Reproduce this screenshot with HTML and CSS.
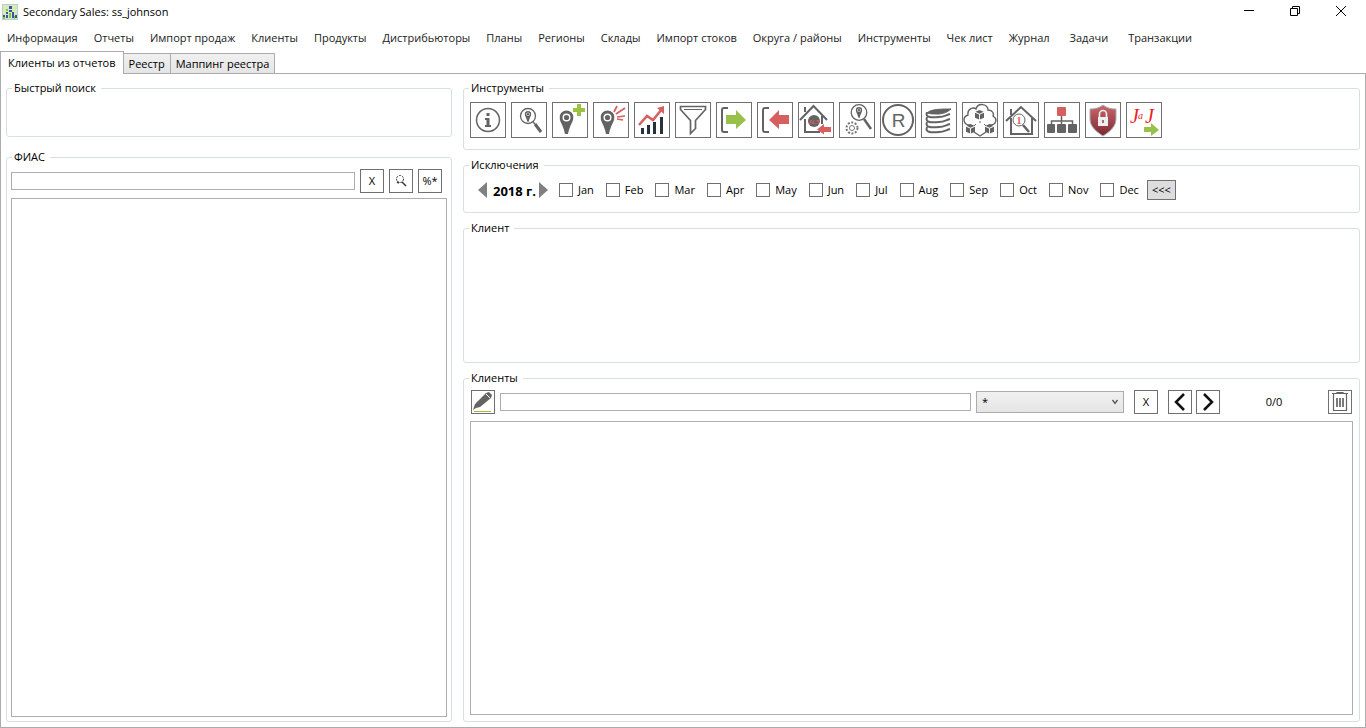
FILE: index.html
```html
<!DOCTYPE html>
<html lang="ru">
<head>
<meta charset="utf-8">
<title>Secondary Sales: ss_johnson</title>
<link rel="stylesheet" href="styles.css">
</head>
<body>
<svg class="defs" aria-hidden="true">
  <defs>
    <linearGradient id="shieldFill" x1="0" y1="0" x2="0" y2="1"><stop offset="0" stop-color="#c9686a"/><stop offset="1" stop-color="#7d2733"/></linearGradient>
    <symbol id="pin" viewBox="0 0 14 24"><path fill="#636363" fill-rule="evenodd" d="M7 0a7 7 0 0 1 7 7c0 4-4 8-5.500 16.500h-3C4 15 0 11 0 7a7 7 0 0 1 7-7zm0 3a4 4 0 1 0 0 8 4 4 0 0 0 0-8z"/><circle cx="7" cy="7" r="2.600" fill="#636363"/></symbol>
    <symbol id="cube" viewBox="0 0 10 11"><path fill="#636363" d="M5 0l4.500 2L5 4 .5 2zM0 3l4.500 2v5.500L0 8.500zM10 3v5.500l-4.500 2V5z"/></symbol>
  </defs>
</svg>
<header class="titlebar">
  <svg class="app-icon" viewBox="0 0 16 16"><rect x=".5" y=".5" width="15" height="15" fill="#d9eab9" stroke="#b5cfd0"/><g fill="#2f58a6"><rect x="1" y="11" width="2" height="2"/><rect x="4" y="8" width="2" height="2"/><rect x="4" y="11" width="2" height="3"/><rect x="7" y="2" width="3" height="3"/><rect x="7" y="6" width="3" height="2"/><rect x="10" y="8" width="2" height="6"/><rect x="13" y="11" width="2" height="3"/></g><path fill="#8fbf45" d="M7 9h2v5H7zM1 13h2v2H1zM12 12h1v3h-1zM4 5h2v2H4z"/></svg>
  <h1>Secondary Sales: ss_johnson</h1>
  <div class="window-buttons">
    <button aria-label="Свернуть"><svg viewBox="0 0 12 12"><path d="M1 4.500h10"/></svg></button>
    <button aria-label="Восстановить"><svg viewBox="0 0 12 12"><path d="M1.500 2.500h7v7h-7zM3.500 2.500v-2h7v7h-2"/></svg></button>
    <button aria-label="Закрыть"><svg viewBox="0 0 12 12"><path d="M1 0l10 10M11 0L1 10"/></svg></button>
  </div>
</header>
<nav class="menu">
  <button>Информация</button><button>Отчеты</button><button>Импорт продаж</button><button>Клиенты</button><button>Продукты</button><button>Дистрибьюторы</button><button>Планы</button><button>Регионы</button><button>Склады</button><button>Импорт стоков</button><button>Округа / районы</button><button>Инструменты</button><button>Чек лист</button><button>Журнал</button><button class="spaced">Задачи</button><button class="spaced">Транзакции</button>
</nav>
<div class="tabs" role="tablist">
  <button class="tab active" role="tab" aria-selected="true">Клиенты из отчетов</button>
  <button class="tab" role="tab" aria-selected="false">Реестр</button>
  <button class="tab" role="tab" aria-selected="false">Маппинг реестра</button>
</div>
<main class="page">
  <div class="column left">
    <fieldset class="group quick"><legend>Быстрый поиск</legend></fieldset>
    <fieldset class="group grow">
      <legend>ФИАС</legend>
      <div class="fias">
        <div class="search-row">
          <input class="field" type="text" aria-label="ФИАС">
          <button class="small">X</button>
          <button class="small" aria-label="Найти"><svg viewBox="0 0 22 22" fill="none" stroke="#333"><circle cx="10" cy="9" r="3.500" stroke-dasharray="2 1"/><path d="M7 12l2 1M12 12l4 4" stroke-width="1.500"/></svg></button>
          <button class="small">%*</button>
        </div>
        <div class="list"></div>
      </div>
    </fieldset>
  </div>
  <div class="column right">
    <fieldset class="group">
      <legend>Инструменты</legend>
      <div class="tools">
        <button class="tool" aria-label="Информация"><svg viewBox="0 0 34 34"><circle cx="17" cy="17" r="11.500" fill="none" stroke="#636363" stroke-width="1.500"/><path fill="#636363" d="M15.500 10h3v3h-3zM14 15h4.500v7H20v2h-6v-2h1.500v-5H14z"/></svg></button>
        <button class="tool" aria-label="Поиск точки"><svg viewBox="0 0 34 34"><circle cx="16" cy="13" r="7.500" fill="none" stroke="#636363" stroke-width="1.300"/><use href="#pin" x="12.500" y="8" width="7" height="11"/><path d="M21 19l2 2" stroke="#636363" stroke-width="1.500"/><path d="M23 21l6 8" stroke="#636363" stroke-width="3"/></svg></button>
        <button class="tool" aria-label="Добавить точку"><svg viewBox="0 0 34 34"><use href="#pin" x="6.500" y="7" width="14" height="25"/><path fill="#9bc241" d="M24 1h4v4h4v4h-4v4h-4V9h-4V5h4z"/></svg></button>
        <button class="tool" aria-label="Новая точка"><svg viewBox="0 0 34 34"><use href="#pin" x="6.500" y="7" width="14" height="25"/><path d="M20 9l3-6M22 11l9-6M23 14l8-1M23 16l6 1" stroke="#d65f5f" stroke-width="1.700"/></svg></button>
        <button class="tool" aria-label="График"><svg viewBox="0 0 34 34"><path fill="#27333b" d="M6 25h3v6H6zM12 22h3v9h-3zM18 19h3v12h-3zM25 14h3v17h-3z"/><path d="M4 22l8-9 6 4 9-11" fill="none" stroke="#d65f5f" stroke-width="2.500"/><path fill="#d65f5f" d="M22 5l7-2v8z"/></svg></button>
        <button class="tool" aria-label="Фильтр"><svg viewBox="0 0 34 34"><path d="M4.500 3.500h25v3l-10 11v8l-5 5v-13l-10-11z" fill="none" stroke="#636363" stroke-width="1.700"/><path d="M8 6.500h18" stroke="#636363"/></svg></button>
        <button class="tool" aria-label="Экспорт"><svg viewBox="0 0 34 34"><path d="M11 5H7q-2 0-2 2v20q0 2 2 2h4" fill="none" stroke="#636363" stroke-width="2"/><path fill="#98c04b" d="M9 12h10V7l10 10-10 9v-5H9z"/></svg></button>
        <button class="tool" aria-label="Импорт"><svg viewBox="0 0 34 34"><path d="M11 5H7q-2 0-2 2v20q0 2 2 2h4" fill="none" stroke="#636363" stroke-width="2"/><path fill="#d65f5f" d="M31 12H21V7L11 17l10 9v-5h10z"/></svg></button>
        <button class="tool" aria-label="Альтернативный адрес"><svg viewBox="0 0 34 34"><path d="M1 17L14.500 3 28 17M6 16v13h15M23 13v8M6 9V4" fill="none" stroke="#636363" stroke-width="2"/><circle cx="15" cy="18" r="6" fill="#636363"/><text x="15" y="20.500" font-size="6" font-weight="bold" fill="#d65f5f" text-anchor="middle">ALT</text><path fill="#d65f5f" d="M32 24h-7v-3l-7 5.500 7 5V29h7z"/></svg></button>
        <button class="tool" aria-label="Настройка поиска"><svg viewBox="0 0 34 34"><circle cx="19" cy="9.500" r="7.800" fill="none" stroke="#636363" stroke-width="1.300"/><use href="#pin" x="15.500" y="4" width="7" height="11"/><path d="M24 16l7 10" stroke="#636363" stroke-width="2.500"/><circle cx="12" cy="25" r="5.500" fill="none" stroke="#777" stroke-width="2" stroke-dasharray="2 1.500"/><circle cx="12" cy="25" r="2.500" fill="none" stroke="#777"/></svg></button>
        <button class="tool" aria-label="Регистр"><svg viewBox="0 0 34 34"><circle cx="17" cy="17" r="15" fill="none" stroke="#636363" stroke-width="2"/><text x="17.500" y="24" font-size="19" fill="#636363" text-anchor="middle">R</text></svg></button>
        <button class="tool" aria-label="База данных"><svg viewBox="0 0 34 34" fill="none" stroke="#636363" stroke-width="2"><path fill="#636363" stroke-width="1" d="M5 10c4-4 14-4 24-4-3 2-4 4-12 5-5 0-9 0-12-1z"/><path d="M5 9c-2 5 3 6 12 5 5 0 7-2 11-3M5 14c-2 5 3 6 12 5 5 0 7-2 11-3M5 19c-2 5 3 6 12 5 5 0 7-2 11-3M5 24c-2 5 3 6 12 5 5 0 7-2 11-3"/></svg></button>
        <button class="tool" aria-label="Облако"><svg viewBox="0 0 34 34"><path d="M7 22C0 22-1 14 5 12 4 5 11 4 13 6c2-7 12-5 12 1 5 0 6 4 5 6 5 3 3 9-3 9M11 29l6 4 6-4" fill="none" stroke="#636363" stroke-width="1.400"/><use href="#cube" x="12" y="7" width="9" height="10"/><use href="#cube" x="3" y="21" width="9" height="10"/><use href="#cube" x="22" y="21" width="9" height="10"/><path d="M17 18v2M13 21l-2 2M21 21l2 2" stroke="#636363"/></svg></button>
        <button class="tool" aria-label="Поиск по дому"><svg viewBox="0 0 34 34"><path d="M2 18L17 4l15 14M7 15v16h21V15M7 12V6" fill="none" stroke="#636363" stroke-width="2"/><circle cx="15" cy="17" r="6" fill="#fff" stroke="#636363"/><text class="serif" x="15" y="20.500" font-size="10" font-weight="bold" fill="#d65f5f" text-anchor="middle">1</text><path d="M19 22l6 7" stroke="#636363" stroke-width="2.500"/></svg></button>
        <button class="tool" aria-label="Структура"><svg viewBox="0 0 34 34"><rect x="12" y="4" width="9" height="9" rx="1" fill="#d65f5f"/><path d="M16.500 13v9M6.500 22v-4h21v4" fill="none" stroke="#636363" stroke-width="1.500"/><g fill="#636363"><rect x="2" y="21" width="8" height="9" rx="1"/><rect x="12" y="21" width="9" height="9" rx="1"/><rect x="23" y="21" width="9" height="9" rx="1"/></g></svg></button>
        <button class="tool" aria-label="Защита"><svg viewBox="0 0 34 34"><path fill="url(#shieldFill)" stroke="#aab0b4" d="M17 2c4 3 8 4 13 4v10c0 8-7 13-13 17C11 29 4 24 4 16V6c5 0 9-1 13-4z"/><path d="M13.500 14v-3a3.500 3.500 0 0 1 7 0v3" fill="none" stroke="#eee" stroke-width="1.700"/><rect x="12" y="14" width="10" height="9" fill="#eee"/><path stroke="#963d45" stroke-width="1.500" d="M17 17v3"/></svg></button>
        <button class="tool" aria-label="Johnson &amp; Johnson"><svg viewBox="0 0 34 34"><g class="script" fill="#ed1c24"><text x="3" y="20" font-size="20">J</text><text x="11" y="16" font-size="10">a</text><text x="18" y="20" font-size="20">J</text></g><path fill="#98c04b" d="M17 24h7v-4l8 7-8 6v-4h-7z"/></svg></button>
      </div>
    </fieldset>
    <fieldset class="group">
      <legend>Исключения</legend>
      <div class="months">
        <button class="arrow" aria-label="Предыдущий год"><svg viewBox="0 0 9 16"><path fill="#808080" d="M9 0v16L0 8z"/></svg></button>
        <strong>2018 г.</strong>
        <button class="arrow" aria-label="Следующий год"><svg viewBox="0 0 9 16"><path fill="#808080" d="M0 0v16l9-8z"/></svg></button>
        <div class="month-list">
          <label><input type="checkbox">Jan</label><label><input type="checkbox">Feb</label><label><input type="checkbox">Mar</label><label><input type="checkbox">Apr</label><label><input type="checkbox">May</label><label><input type="checkbox">Jun</label><label><input type="checkbox">Jul</label><label><input type="checkbox">Aug</label><label><input type="checkbox">Sep</label><label><input type="checkbox">Oct</label><label><input type="checkbox">Nov</label><label><input type="checkbox">Dec</label>
        </div>
        <button class="back">&lt;&lt;&lt;</button>
      </div>
    </fieldset>
    <fieldset class="group client"><legend>Клиент</legend></fieldset>
    <fieldset class="group grow">
      <legend>Клиенты</legend>
      <div class="clients">
        <div class="client-row">
          <button class="small" aria-label="Выделить"><svg viewBox="0 0 22 22"><path fill="#636363" d="M1 19l2-6L14 2l3-1 3 3-1 3L8 16l-4 1z"/><path d="M14 3l4 4" stroke="#fff"/><path d="M2 20.500h17" stroke="#9bc241"/></svg></button>
          <input class="field" type="text" aria-label="Клиенты">
          <div class="combo"><select aria-label="Фильтр клиентов"><option>*</option></select><svg viewBox="0 0 6 6"><path d="M.5 1L3 4.500 5.500 1" fill="none" stroke="#555" stroke-width="1.300"/></svg></div>
          <button class="small clear">X</button>
          <div class="pager">
            <button class="small" aria-label="Назад"><svg viewBox="0 0 22 22"><path d="M15 3l-8 8 8 8" fill="none" stroke="#111" stroke-width="2.500"/></svg></button>
            <button class="small" aria-label="Вперёд"><svg viewBox="0 0 22 22"><path d="M7 3l8 8-8 8" fill="none" stroke="#111" stroke-width="2.500"/></svg></button>
          </div>
          <output>0/0</output>
          <button class="small" aria-label="Удалить"><svg viewBox="0 0 22 22" fill="none" stroke="#636363" stroke-width="1.200"><path d="M3 2.500h16M8 2.500v-1h6v1M4.500 3v16.500h13V3"/><path d="M8 7v9M11 7v9M14 7v9" stroke-width="1.700"/></svg></button>
        </div>
        <div class="list"></div>
      </div>
    </fieldset>
  </div>
</main>
</body>
</html>
```
FILE: styles.css
```css
* { box-sizing: border-box; }
body {
  margin: 0;
  min-height: 100vh;
  display: flex;
  flex-direction: column;
  background: #fff;
  color: #000;
  font: 11px/16px "Open Sans", "Noto Sans", sans-serif;
}
button, input, select { font: inherit; color: inherit; margin: 0; }
button { padding: 0; border: 0; background: none; white-space: nowrap; }
svg { display: block; flex: none; }
.defs { position: absolute; width: 0; height: 0; }

.titlebar { display: flex; align-items: center; height: 24px; padding-left: 2px; }
.app-icon { width: 16px; height: 16px; }
h1 { margin: 0 0 0 5px; font-size: 11px; font-weight: 400; }
.window-buttons { display: flex; margin-left: auto; margin-right: 2px; }
.window-buttons button { width: 46px; height: 20px; display: grid; place-items: center; }
.window-buttons svg { width: 12px; height: 12px; fill: none; stroke: #000; }

.menu { display: flex; gap: 16px; height: 28px; padding: 0 7px; align-items: center; color: #212121; }
.menu .spaced { margin-left: 4px; }

.tabs { display: flex; align-items: flex-end; height: 22px; margin-bottom: -1px; z-index: 1; }
.tab {
  height: 21px;
  padding: 0 5px;
  margin-left: -1px;
  border: 1px solid #acacac;
  background: linear-gradient(#f0f0f0, #e5e5e5);
}
.tab.active { height: 23px; margin: 0; padding: 0 7px; background: #fff; border-bottom: 0; }

.page {
  flex: 1;
  display: grid;
  grid-template-columns: 446px 1fr;
  gap: 11px;
  padding: 6px 5px 5px;
  border: 1px solid #acacac;
}
.column { display: flex; flex-direction: column; min-width: 0; }
.left { gap: 12px; }
.right { gap: 7px; }

.group { margin: 0; padding: 0; min-width: 0; border: 1px solid #d5dfe5; border-radius: 3px; }
.group legend { margin-left: 5px; padding: 0 5px 0 2px; line-height: 16px; }
.quick { height: 57px; }
.client { height: 143px; }
.grow { flex: 1; display: flex; flex-direction: column; }

.fias, .clients { flex: 1; display: flex; flex-direction: column; }
.fias { padding: 4px; gap: 5px; }
.clients { padding: 4px 6px 6px; gap: 7px; }
.search-row, .client-row { display: flex; align-items: center; gap: 5px; }
.search-row { padding-right: 5px; }
.client-row { padding: 0 1px; }
.field { flex: 1; min-width: 0; height: 18px; padding: 0 3px; border: 1px solid #abadb3; background: #fff; }
.small { flex: none; width: 24px; height: 24px; border: 1px solid #707070; display: grid; place-items: center; background: #fff; }
.small svg { width: 22px; height: 22px; }
.list { flex: 1; border: 1px solid #abadb3; }

.tools { display: flex; flex-wrap: wrap; gap: 5px; padding: 6px 6px 11px; }
.tool { width: 36px; height: 36px; border: 1px solid #707070; background: #fff; }
.tool svg { width: 34px; height: 34px; font-family: "Liberation Sans", sans-serif; }
.tool .serif { font-family: "Liberation Serif", serif; }
.tool .script { font-family: "Liberation Serif", serif; font-style: italic; }

.months { display: flex; align-items: center; height: 39px; padding: 0 14px 6px; }
.months strong { padding: 2px 3px 0 6px; font-size: 13px; }
.arrow svg { width: 9px; height: 16px; }
.month-list { display: flex; gap: 12px; margin-left: 11px; }
.month-list label { display: flex; align-items: center; gap: 5px; }
.month-list input { appearance: none; width: 14px; height: 14px; border: 1px solid #707070; background: #fff; }
.back { width: 29px; height: 20px; margin-left: 8px; border: 1px solid #707070; background: #ddd; }

.combo { display: grid; align-items: center; width: 148px; height: 22px; }
.combo > * { grid-area: 1 / 1; }
.combo select { appearance: none; width: 100%; height: 22px; padding: 0 5px; border: 1px solid #acacac; border-radius: 0; background: linear-gradient(#f0f0f0, #e5e5e5); }
.combo svg { width: 6px; height: 6px; justify-self: end; margin-right: 6px; pointer-events: none; }
.clear { margin: 0 5px; }
.pager { display: flex; gap: 4px; }
.client-row output { width: 98px; text-align: center; }
```
